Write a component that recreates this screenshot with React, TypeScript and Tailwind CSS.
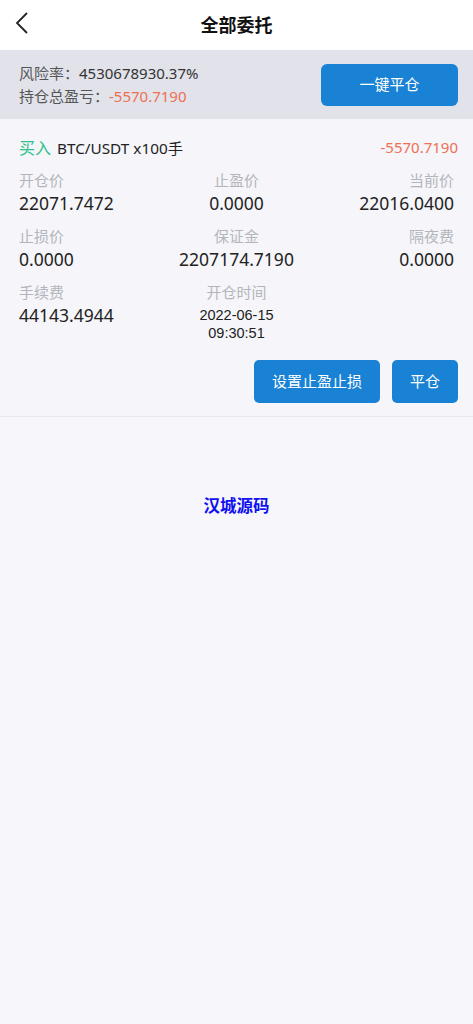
import React from "react";

const font = { fontFamily: '"Noto Sans", "Noto Sans CJK SC", sans-serif' };

function Cell({
  label,
  value,
  align,
}: {
  label: string;
  value: React.ReactNode;
  align: "left" | "center" | "right";
}) {
  const a =
    align === "left" ? "text-left" : align === "center" ? "text-center" : "text-right";
  return (
    <div className={a}>
      <div className="text-[15px] leading-[20px] text-[#b4b5bc]">{label}</div>
      <div className="text-[17.5px] leading-[26px] text-[#222]">{value}</div>
    </div>
  );
}

export default function App() {
  return (
    <div className="min-h-[1024px] w-full bg-[#f6f6fb]" style={font}>
      {/* Header */}
      <div className="relative flex h-[50px] items-center justify-center bg-white">
        <svg
          className="absolute left-[12px] top-[9px]"
          width="22"
          height="28"
          viewBox="0 0 22 28"
          fill="none"
        >
          <path d="M15 4 L5 14 L15 24" stroke="#222" strokeWidth="1.8" />
        </svg>
        <h1 className="text-[18px] font-bold text-[#111]">全部委托</h1>
      </div>

      {/* Summary */}
      <div className="flex h-[69px] items-center justify-between bg-[#e1e2ea] pl-[19px] pr-[15px]">
        <div className="text-[15px] leading-[23px]">
          <div className="text-[#333]">
            <span className="text-[#555]">风险率：</span>4530678930.37%
          </div>
          <div>
            <span className="text-[#555]">持仓总盈亏：</span>
            <span className="text-[#ee7050]">-5570.7190</span>
          </div>
        </div>
        <button className="h-[42px] w-[137px] rounded-[6px] bg-[#1a82d4] text-[15px] text-white">
          一键平仓
        </button>
      </div>

      {/* Position card */}
      <div className="border-b border-[#e8e8ee] bg-[#f5f5fa] pb-[13px] pl-[19px] pr-[15px] pt-[17px]">
        <div className="flex h-[24px] items-center justify-between">
          <div className="flex items-center gap-[6px]">
            <span className="text-[16px] text-[#2cc18a]">买入</span>
            <span className="text-[15.3px] text-[#222]">BTC/USDT x100手</span>
          </div>
          <span className="-mt-[2px] text-[15px] text-[#ee7050]">-5570.7190</span>
        </div>

        <div className="mt-[10px] grid grid-cols-3 gap-y-[10px] pr-[4px]">
          <Cell label="开仓价" value="22071.7472" align="left" />
          <Cell label="止盈价" value="0.0000" align="center" />
          <Cell label="当前价" value="22016.0400" align="right" />
          <Cell label="止损价" value="0.0000" align="left" />
          <Cell label="保证金" value="2207174.7190" align="center" />
          <Cell label="隔夜费" value="0.0000" align="right" />
          <Cell label="手续费" value="44143.4944" align="left" />
          <div className="text-center">
            <div className="text-[15px] leading-[20px] text-[#b4b5bc]">开仓时间</div>
            <div className="mt-[4px] font-['Liberation_Sans',sans-serif] text-[14.5px] leading-[18px] text-[#222]">
              <div>2022-06-15</div>
              <div>09:30:51</div>
            </div>
          </div>
          <div />
        </div>

        <div className="mt-[18px] flex justify-end gap-[12px]">
          <button className="h-[43px] w-[126px] rounded-[5px] bg-[#1a82d4] text-[15px] text-white">
            设置止盈止损
          </button>
          <button className="h-[43px] w-[66px] rounded-[5px] bg-[#1a82d4] text-[15px] text-white">
            平仓
          </button>
        </div>
      </div>

      {/* Watermark */}
      <div className="mt-[77px] text-center text-[16.5px] font-bold text-[#1010f0]">
        汉城源码
      </div>
    </div>
  );
}
